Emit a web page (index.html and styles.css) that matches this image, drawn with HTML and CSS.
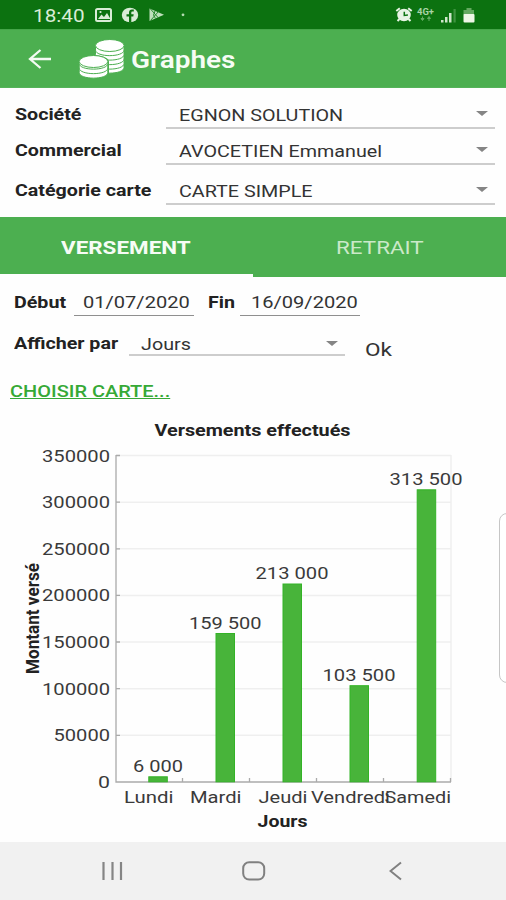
FILE: index.html
```html
<!DOCTYPE html>
<html lang="fr">
<head>
<meta charset="utf-8">
<title>Graphes</title>
<link rel="stylesheet" href="styles.css">
</head>
<body>
<div class="app">
  <div class="status">
    <span class="wide clock">18:40</span>
    <svg class="status-left" width="100" height="29" viewBox="0 0 100 29">
      <rect x="2" y="9" width="15" height="12" rx="1.5" fill="none" stroke="#d9ecd6" stroke-width="2"/>
      <path d="M4 19l3.500-4.500 2.500 2.500 3-4 3.500 6z" fill="#d9ecd6"/><circle cx="6.500" cy="12" r="1.100" fill="#d9ecd6"/>
      <ellipse cx="36" cy="15" rx="8.200" ry="7.300" fill="#d9ecd6"/>
      <path d="M35 22.500v-6h-2.500v-2.300H35v-1.700c0-2 1.200-3 3-3h1.800v2h-1.300c-.9 0-1.200.4-1.200 1.200v1.500h2.400l-.4 2.300h-2v6z" fill="#0c7210"/>
      <path d="M55.500 8.500v12.500l14.500-6.200z" fill="#bfe0bc"/><path d="M56.500 9l8 9M56.500 20.500l8-9M61 11l-1.500 4 2 3.500" fill="none" stroke="#2b8a30" stroke-width="1"/>
      <circle cx="89" cy="14.800" r="1.400" fill="#b5dcb2"/>
    </svg>
    <svg class="status-right" width="84" height="29" viewBox="0 0 84 29">
      <g fill="none" stroke="#e8f4e4" stroke-width="2"><ellipse cx="9" cy="15" rx="5.800" ry="5.300" fill="#e8f4e4"/><path d="M1.300 11l3.500-2.800M16.700 11l-3.500-2.800M4.500 19l-2 2M13.500 19l2 2"/></g>
      <path d="M9.300 11.800v3.700l3.600-.4" fill="none" stroke="#0c7210" stroke-width="1.500"/>
      <text class="net" x="22" y="14.500" textLength="17" lengthAdjust="spacingAndGlyphs">4G+</text>
      <path d="M27.500 16.500v3.200M26 18.500l1.500 2 1.500-2zM34 21v-3.500M32.500 18.500l1.500-2 1.500 2z" stroke="#63ac62" stroke-width="1" fill="#63ac62"/>
      <g fill="#cfe6cb"><rect x="46" y="20" width="2.500" height="2.500"/><rect x="50" y="17" width="2.500" height="5.500"/><rect x="54" y="13" width="2.500" height="9.500"/></g><rect x="58.500" y="9" width="2.200" height="13.500" fill="#3f9341"/>
      <path d="M71.500 8h5v2h2.500v5H68.500v-5h3z" fill="#64a960"/><rect x="68.500" y="14" width="11" height="8.500" rx="1" fill="#eef6e6"/>
    </svg>
  </div>

  <header class="bar">
    <svg class="back" width="24" height="22" viewBox="0 0 24 22"><path d="M12.500 2L2 11l10.500 9M2.500 11H23" fill="none" stroke="#f3fbf2" stroke-width="2.300"/></svg>
    <svg class="coins" width="46" height="40" viewBox="0 0 46 40">
      <g fill="#fff" stroke="#4caf50" stroke-width="1">
        <path d="M16.500 24v4.500c0 7.500 28.500 7.500 28.500 0V24z"/>
        <path d="M16.500 20v4.500c0 7.500 28.500 7.500 28.500 0V20z"/>
        <path d="M16.500 15.500V20c0 7.500 28.500 7.500 28.500 0v-4.500z"/>
        <path d="M16.500 11v4.500c0 7.500 28.500 7.500 28.500 0V11z"/>
        <path d="M16.500 6.500V11c0 7.500 28.500 7.500 28.500 0V6.500z"/>
        <ellipse cx="30.800" cy="6.500" rx="14.300" ry="6"/>
      </g>
      <path d="M0 23c0-9 30-9 30 0v17H0z" fill="#4caf50"/>
      <g fill="#fff" stroke="#4caf50" stroke-width="1">
        <path d="M.2 29v4.500c0 7.500 28.600 7.500 28.600 0V29z"/>
        <path d="M.2 25v4c0 7.500 28.600 7.500 28.600 0v-4z"/>
        <path d="M.2 22v2.500c0 7.500 28.600 7.500 28.600 0V22z"/>
        <ellipse cx="14.500" cy="22.500" rx="14.300" ry="6"/>
      </g>
    </svg>
    <h1 class="wide title">Graphes</h1>
  </header>

  <section class="filters">
    <div class="field"><label class="wide strong">Société</label><div class="select"><span class="wide">EGNON SOLUTION</span><i class="caret"></i></div></div>
    <div class="field"><label class="wide strong">Commercial</label><div class="select"><span class="wide">AVOCETIEN Emmanuel</span><i class="caret"></i></div></div>
    <div class="field last"><label class="wide strong">Catégorie carte</label><div class="select"><span class="wide">CARTE SIMPLE</span><i class="caret"></i></div></div>
  </section>

  <nav class="tabs">
    <div class="tab active"><span class="wide">VERSEMENT</span></div>
    <div class="tab"><span class="wide">RETRAIT</span></div>
  </nav>

  <section class="period">
    <div class="dates">
      <label class="wide strong">Début</label><div class="date"><span class="wide">01/07/2020</span></div>
      <label class="wide strong">Fin</label><div class="date"><span class="wide">16/09/2020</span></div>
    </div>
    <div class="group">
      <label class="wide strong">Afficher par</label><div class="select"><span class="wide">Jours</span><i class="caret"></i></div>
      <span class="wide ok">Ok</span>
    </div>
    <a class="wide choose">CHOISIR CARTE...</a>
  </section>

  <svg class="chart" width="506" height="432" viewBox="0 410 506 432">
    <g class="grid">
      <path d="M116 455.500H451M116 502.200H451M116 548.800H451M116 595.400H451M116 642H451M116 688.700H451M116 735.300H451M451 455V782"/>
    </g>
    <g class="axis">
      <path d="M116 455V782H451M116 455.500h4M116 502.200h4M116 548.800h4M116 595.400h4M116 642h4M116 688.700h4M116 735.300h4M182.500 782v-4M249.500 782v-4M316.500 782v-4M383.500 782v-4M450.500 782v-4"/>
    </g>
    <g class="bars">
      <rect x="148.800" y="776.800" width="18.500" height="5"/>
      <rect x="216" y="633.500" width="18.500" height="148.300"/>
      <rect x="283" y="584" width="18.500" height="197.800"/>
      <rect x="350" y="685.700" width="18.500" height="96.100"/>
      <rect x="417.200" y="489.800" width="18.500" height="292"/>
    </g>
    <g class="head">
      <text x="154.500" y="436" textLength="196" lengthAdjust="spacingAndGlyphs">Versements effectués</text>
      <text x="257.500" y="826.600" textLength="50" lengthAdjust="spacingAndGlyphs">Jours</text>
      <text class="ylabel" transform="translate(38.500 674) rotate(-90)" textLength="111" lengthAdjust="spacingAndGlyphs">Montant versé</text>
    </g>
    <g class="num">
      <text x="42" y="461.500" textLength="68" lengthAdjust="spacingAndGlyphs">350000</text>
      <text x="42" y="508.200" textLength="68" lengthAdjust="spacingAndGlyphs">300000</text>
      <text x="42" y="554.800" textLength="68" lengthAdjust="spacingAndGlyphs">250000</text>
      <text x="42" y="601.400" textLength="68" lengthAdjust="spacingAndGlyphs">200000</text>
      <text x="42" y="648" textLength="68" lengthAdjust="spacingAndGlyphs">150000</text>
      <text x="42" y="694.600" textLength="68" lengthAdjust="spacingAndGlyphs">100000</text>
      <text x="53.500" y="741.200" textLength="56.500" lengthAdjust="spacingAndGlyphs">50000</text>
      <text x="98" y="788" textLength="12" lengthAdjust="spacingAndGlyphs">0</text>
      <text x="133" y="772" textLength="50" lengthAdjust="spacingAndGlyphs">6 000</text>
      <text x="189" y="629" textLength="72.500" lengthAdjust="spacingAndGlyphs">159 500</text>
      <text x="255.500" y="579" textLength="73" lengthAdjust="spacingAndGlyphs">213 000</text>
      <text x="322.500" y="680.500" textLength="73" lengthAdjust="spacingAndGlyphs">103 500</text>
      <text x="389.500" y="485" textLength="73" lengthAdjust="spacingAndGlyphs">313 500</text>
      <text x="124" y="803" textLength="49.500" lengthAdjust="spacingAndGlyphs">Lundi</text>
      <text x="190" y="803" textLength="51.500" lengthAdjust="spacingAndGlyphs">Mardi</text>
      <text x="258.500" y="803" textLength="49" lengthAdjust="spacingAndGlyphs">Jeudi</text>
      <text x="311" y="803" textLength="79" lengthAdjust="spacingAndGlyphs">Vendredi</text>
      <text x="384.500" y="803" textLength="66.500" lengthAdjust="spacingAndGlyphs">Samedi</text>
    </g>
  </svg>

  <footer class="nav">
    <svg width="24" height="20" viewBox="0 0 24 20"><path d="M2.500 1v18M11.500 1v18M20 1v18" stroke="#858585" stroke-width="2.200" fill="none"/></svg>
    <svg width="24" height="20" viewBox="0 0 24 20"><rect x="1.200" y="1.200" width="21" height="17.400" rx="6" stroke="#808080" stroke-width="2" fill="none"/></svg>
    <svg width="14" height="20" viewBox="0 0 14 20"><path d="M12 1.500L1.500 10 12 18.500" stroke="#808080" stroke-width="2" fill="none"/></svg>
  </footer>
  <div class="edge"></div>
</div>
</body>
</html>
```
FILE: styles.css
```css
* { box-sizing: border-box; }
body { margin: 0; background: #fefefe; font-family: Roboto, "Liberation Sans", sans-serif; font-size: 17px; color: #333; }
.app { position: relative; width: 506px; height: 900px; overflow: hidden; display: flex; flex-direction: column; }
.app > * { flex-shrink: 0; }
svg { display: block; flex: none; }

/* Letterforms are drawn wider than the font's natural proportions */
.wide { display: inline-block; white-space: nowrap; transform: scaleX(1.19); transform-origin: left center; }
.strong { font-weight: 700; font-size: 16.5px; color: #222; }

.status { height: 29px; display: flex; background: #0c7210; }
.clock { width: 60px; margin-left: 33px; line-height: 31px; font-size: 18px; color: #d9ecd6; transform: scaleX(1.15); }
.status-left { margin-left: 1px; }
.status-right { margin-left: 201px; }
.net { font-size: 9px; font-weight: 700; fill: #a9d3a6; }

.bar { height: 59px; display: flex; align-items: center; background: #4caf50; border-top: 1px solid #45a549; border-bottom: 1px solid #55b35a; }
.back { margin-left: 28px; }
.coins { margin-left: 27px; }
.title { margin: 3px 0 0 6px; font-size: 23.5px; font-weight: 600; line-height: 30px; color: #f6fcf5; }

.filters { height: 129px; padding: 12px 11px 0 15px; display: flex; flex-direction: column; gap: 7px; }
.field { display: grid; grid-template-columns: 151px 1fr; grid-template-rows: 29px; height: 29px; line-height: 30px; }
.field.last { margin-top: 4px; }
.field .strong { justify-self: start; }
.select { display: flex; justify-content: space-between; padding: 0 7px 0 13px; border-bottom: 2px solid #cdcdcd; }
.select .wide { transform: scaleX(1.16); }
.caret { width: 12px; height: 5px; margin-top: 11px; background: #858585; clip-path: polygon(0 0, 100% 0, 50% 100%); }

.tabs { height: 60px; display: grid; grid-template-columns: 253px 253px; grid-template-rows: 60px; background: #4caf50; }
.tab { padding-left: 83px; line-height: 62px; font-size: 18px; color: #cbe9c9; }
.tab .wide { height: 57px; transform: scaleX(1.245); }
.tab.active { padding-left: 61px; font-weight: 700; color: #f6fcf5; border-bottom: 3px solid #fefefe; }

.period { height: 133px; padding-top: 11px; }
.dates, .group { display: flex; height: 28px; line-height: 28px; }
.dates { padding-left: 14px; }
.dates .strong { width: 60px; line-height: 29px; }
.date { width: 120px; padding-left: 9px; border-bottom: 1px solid #8f8f8f; }
.date .wide { transform: scaleX(1.18); }
.dates .date + .strong { width: 31px; margin-left: 14px; margin-right: 1px; }
.date:last-child { padding-left: 11px; }
.group { margin-top: 13px; padding-left: 14px; }
.group .strong { width: 115px; line-height: 29px; }
.group .select { width: 216px; height: 27px; padding-left: 12px; line-height: 31px; }
.group .caret { margin-top: 12px; }
.ok { margin-left: 20px; font-size: 19px; line-height: 42px; }
.choose { margin: 24px 0 0 10px; line-height: 20px; font-weight: 500; color: #36a936; text-decoration: underline; text-underline-offset: 1px; text-decoration-thickness: 1px; transform: scaleX(1.175); }

.chart { height: 432px; }
.chart text { font-family: Roboto, sans-serif; }
.grid path { stroke: #efefef; stroke-width: 1.5; fill: none; }
.axis path { stroke: #aaa; stroke-width: 1.3; fill: none; }
.bars rect { fill: #48b43a; stroke: #33b326; stroke-width: 1; }
.num text { font-size: 17px; fill: #3a3a3a; }
.head text { font-size: 16.5px; font-weight: 700; fill: #222; }
.head .ylabel { font-size: 18.5px; }

.nav { height: 58px; display: grid; grid-template-columns: 141px 147px 30px; padding-left: 101px; align-items: center; background: #f1f1f1; }
.edge { position: absolute; left: 499px; top: 513px; width: 20px; height: 170px; border: 1.5px solid #c6c6c6; border-radius: 8px; background: #fff; }
```
